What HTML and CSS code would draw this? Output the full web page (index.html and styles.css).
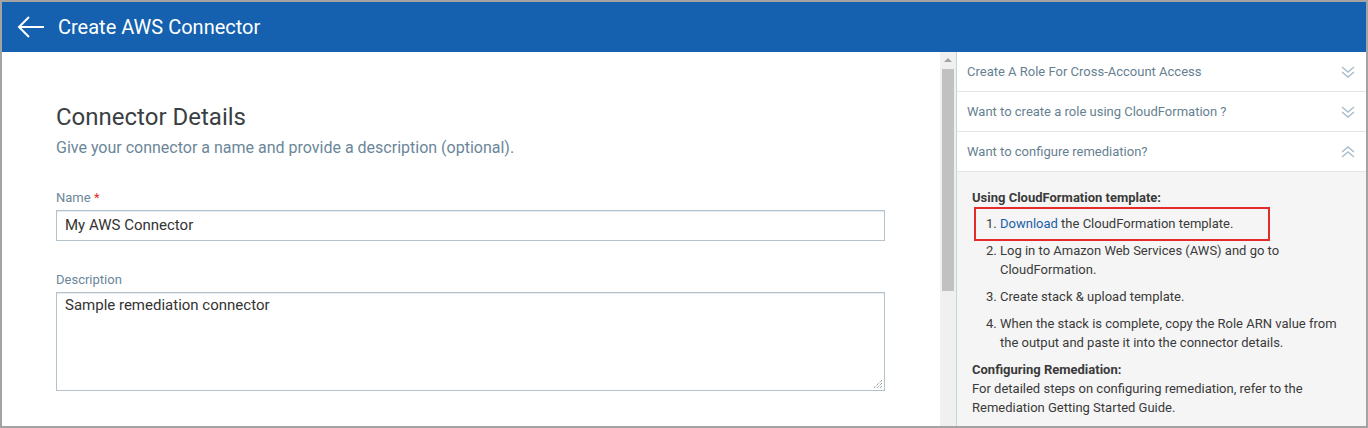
FILE: index.html
```html
<!DOCTYPE html>
<html>
<head>
<meta charset="utf-8">
<link rel="stylesheet" href="styles.css">
</head>
<body>
<div class="frame">
  <header class="topbar">
    <svg class="back" width="28" height="22" viewBox="0 0 28 22"><path d="M27 11H2M12 1L2 11L12 21" fill="none" stroke="#fff" stroke-width="2"/></svg>
    <h1 class="title">Create AWS Connector</h1>
  </header>
  <div class="body">
    <main class="main">
      <section class="form">
        <h2 class="heading">Connector Details</h2>
        <p class="sub">Give your connector a name and provide a description (optional).</p>
        <label class="label">Name <span class="req">*</span></label>
        <div class="input">My AWS Connector</div>
        <label class="label label-gap">Description</label>
        <div class="textarea">Sample remediation connector
          <svg class="grip" width="10" height="10" viewBox="0 0 10 10"><path d="M9 1L1 9M9 4L4 9M9 7L7 9" stroke="#777" stroke-width="1" stroke-dasharray="1 1" fill="none"/></svg>
        </div>
      </section>
      <div class="scrollbar">
        <div class="sb-arrow"></div>
        <div class="sb-thumb"></div>
      </div>
    </main>
    <aside class="side">
      <div class="acc-row"><span>Create A Role For Cross-Account Access</span>
        <svg class="chev" width="14" height="14" viewBox="0 0 14 14"><path d="M1 2L7 7L13 2M1 7L7 12L13 7" fill="none" stroke="#a8bcc9" stroke-width="1.4"/></svg></div>
      <div class="acc-row"><span>Want to create a role using CloudFormation ?</span>
        <svg class="chev" width="14" height="14" viewBox="0 0 14 14"><path d="M1 2L7 7L13 2M1 7L7 12L13 7" fill="none" stroke="#a8bcc9" stroke-width="1.4"/></svg></div>
      <div class="acc-row"><span>Want to configure remediation?</span>
        <svg class="chev" width="14" height="14" viewBox="0 0 14 14"><path d="M1 7L7 2L13 7M1 12L7 7L13 12" fill="none" stroke="#a8bcc9" stroke-width="1.4"/></svg></div>
      <div class="acc-body">
        <div class="bold">Using CloudFormation template:</div>
        <ol class="steps">
          <li class="step marked"><span class="num">1.</span><span><a class="link">Download</a> the CloudFormation template.</span></li>
          <li class="step"><span class="num">2.</span><span>Log in to Amazon Web Services (AWS) and go to CloudFormation.</span></li>
          <li class="step"><span class="num">3.</span><span>Create stack &amp; upload template.</span></li>
          <li class="step"><span class="num">4.</span><span>When the stack is complete, copy the Role ARN value from the output and paste it into the connector details.</span></li>
        </ol>
        <div class="bold conf">Configuring Remediation:</div>
        <div>For detailed steps on configuring remediation, refer to the Remediation Getting Started Guide.</div>
      </div>
    </aside>
  </div>
</div>
</body>
</html>
```

FILE: styles.css
```css
* { box-sizing: border-box; }
html, body { margin: 0; padding: 0; }
body { font-family: Roboto, "Liberation Sans", Arial, sans-serif; background: #fff; }
.frame {
  width: 1368px; height: 428px;
  border: 2px solid #a3a3a3;
  display: flex; flex-direction: column;
  overflow: hidden;
}
.topbar {
  height: 50px; flex: none;
  background: #1561b0;
  display: flex; align-items: center;
  padding-left: 15px;
}
.back { display: block; margin-right: 13px; }
.title { margin: 0; font-size: 20px; font-weight: 400; color: #fff; }
.body { flex: 1; display: flex; min-height: 0; }
.main { width: 954px; display: flex; flex: none; }
.form { flex: 1; padding: 51px 0 0 54px; }
.heading { margin: 0; font-size: 24px; line-height: 28px; font-weight: 400; color: #3a3f44; }
.sub { margin: 7px 0 0; font-size: 16px; line-height: 20px; color: #6b8699; }
.label { display: block; margin-top: 32px; font-size: 13px; line-height: 16px; color: #6b8699; }
.label-gap { margin-top: 31px; }
.req { color: #e0302a; }
.input {
  margin-top: 4px; width: 829px; height: 31px;
  border: 1px solid #b3c2cb; box-shadow: inset 0 1px 1px #e4eaf0;
  padding: 0 8px; font-size: 15px; line-height: 29px; color: #333;
}
.textarea {
  position: relative;
  margin-top: 4px; width: 829px; height: 99px;
  border: 1px solid #b3c2cb; box-shadow: inset 0 1px 1px #e4eaf0;
  padding: 2px 8px; font-size: 15px; line-height: 20px; color: #333;
}
.grip { position: absolute; right: 1px; bottom: 1px; }
.scrollbar { width: 16px; flex: none; background: #f0f0f0; display: flex; flex-direction: column; align-items: center; padding-top: 6px; }
.sb-arrow { width: 0; height: 0; border-left: 4px solid transparent; border-right: 4px solid transparent; border-bottom: 4px solid #a3a3a3; }
.sb-thumb { margin-top: 7px; width: 12px; height: 222px; background: #c1c1c1; }
.side { flex: 1; border-left: 1px solid #c8d4de; background: #f5f5f5; display: flex; flex-direction: column; }
.acc-row {
  height: 40px; flex: none; background: #fff;
  border-bottom: 1px solid #e4e4e4;
  display: flex; align-items: center; justify-content: space-between;
  padding: 0 11px 0 10px;
  font-size: 13px; color: #667f91;
}
.chev { display: block; }
.acc-body { padding: 16px 15px 0 15px; font-size: 13px; line-height: 19px; color: #3a3a3a; }
.bold { font-weight: 700; }
.steps { list-style: none; margin: 0; padding: 0 0 0 14px; }
.step { display: flex; margin-top: 7px; }
.step + .step { margin-top: 8px; }
.num { width: 14px; flex: none; }
.marked { position: relative; }
.marked::after {
  content: ""; position: absolute;
  left: -12px; top: -7px; width: 292px; height: 30px;
  border: 2px solid #e32b2b;
}
.link { color: #1a5fa8; }
.conf { margin-top: 8px; }
```
